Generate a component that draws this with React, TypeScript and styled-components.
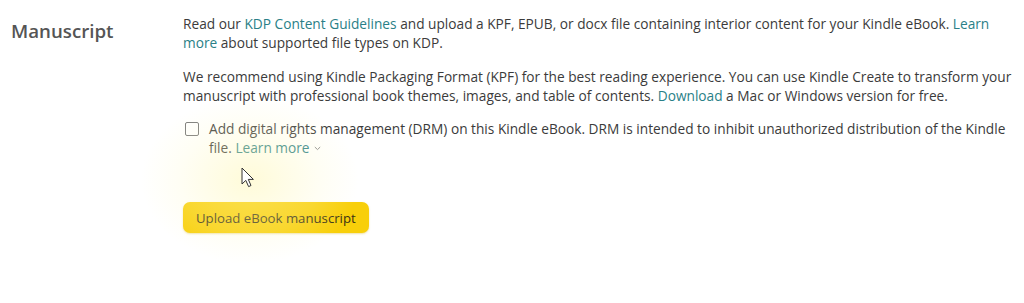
import React from "react";
import styled, { createGlobalStyle } from "styled-components";

const GlobalStyle = createGlobalStyle`
  html, body {
    margin: 0;
    padding: 0;
    background: #ffffff;
  }
  body {
    font-family: "Open Sans", "Noto Sans", sans-serif;
    color: #3b3b3b;
  }
`;

const Page = styled.div`
  position: relative;
  width: 1024px;
  height: 303px;
  overflow: hidden;
  background: #ffffff;
`;

const Section = styled.section`
  display: grid;
  grid-template-columns: 183px 836px;
  padding-top: 14px;
`;

const Heading = styled.h3`
  margin: 0;
  padding: 4px 0 0 11px;
  font-size: 18.7px;
  font-weight: 600;
  color: #555555;
`;

const Content = styled.div`
  display: flex;
  flex-direction: column;
  align-items: flex-start;
`;

const Paragraph = styled.p`
  margin: 0 0 15px;
  font-size: 13.7px;
  line-height: 19px;
  color: #3b3b3b;
`;

const Link = styled.a`
  color: #2a7f87;
  text-decoration: none;
  cursor: pointer;
`;

const CheckRow = styled.label`
  display: flex;
  align-items: flex-start;
  gap: 10px;
  margin: -1px 0 0 2px;
  font-size: 13.7px;
  line-height: 19px;
  color: #3b3b3b;
`;

const Box = styled.span`
  flex: none;
  width: 12px;
  height: 12px;
  margin-top: 3px;
  border: 1px solid #7b7b7b;
  border-radius: 2px;
  background: #ffffff;
`;

const Chevron = styled.svg`
  margin-left: 4px;
  vertical-align: 2px;
`;

const Button = styled.button`
  margin-top: 45px;
  height: 31px;
  padding: 0 13px;
  border: none;
  border-radius: 7px;
  background: #f8cf0a;
  box-shadow: 0 1px 2px rgba(210, 170, 0, 0.35);
  font-family: "Open Sans", "Noto Sans", sans-serif;
  font-size: 13.2px;
  color: #3a3214;
  cursor: pointer;
`;

const Glow = styled.div`
  position: absolute;
  left: 140px;
  top: 95px;
  width: 220px;
  height: 170px;
  pointer-events: none;
  background: radial-gradient(
    ellipse at center,
    rgba(255, 246, 170, 0.45) 0%,
    rgba(255, 250, 200, 0.2) 45%,
    rgba(255, 255, 255, 0) 70%
  );
`;

const Cursor = styled.svg`
  position: absolute;
  left: 241px;
  top: 167px;
  pointer-events: none;
`;

export default function App() {
  return (
    <Page>
      <GlobalStyle />
      <Glow />
      <Section>
        <Heading>Manuscript</Heading>
        <Content>
          <Paragraph>
            Read our <Link>KDP Content Guidelines</Link> and upload a KPF, EPUB,
            or docx file containing interior content for your Kindle eBook.{" "}
            <Link>Learn more</Link> about supported file types on KDP.
          </Paragraph>
          <Paragraph>
            We recommend using Kindle Packaging Format (KPF) for the best reading
            experience. You can use Kindle Create to transform your manuscript
            with professional book themes, images, and table of contents.{" "}
            <Link>Download</Link> a Mac or Windows version for free.
          </Paragraph>
          <CheckRow>
            <Box />
            <span>
              Add digital rights management (DRM) on this Kindle eBook. DRM is
              intended to inhibit unauthorized distribution of the Kindle file.{" "}
              <Link>
                Learn more
                <Chevron width="7" height="5" viewBox="0 0 7 5">
                  <path
                    d="M0.8 1 L3.5 3.6 L6.2 1"
                    fill="none"
                    stroke="#8a8a8a"
                    strokeWidth="1"
                  />
                </Chevron>
              </Link>
            </span>
          </CheckRow>
          <Button>Upload eBook manuscript</Button>
        </Content>
      </Section>
      <Cursor width="14" height="22" viewBox="0 0 14 22">
        <path
          d="M1 1 L1 17 L4.8 13.4 L7.6 19.6 L10 18.5 L7.3 12.4 L12.4 12.4 Z"
          fill="#ffffff"
          stroke="#333333"
          strokeWidth="1"
          strokeLinejoin="round"
        />
      </Cursor>
    </Page>
  );
}
